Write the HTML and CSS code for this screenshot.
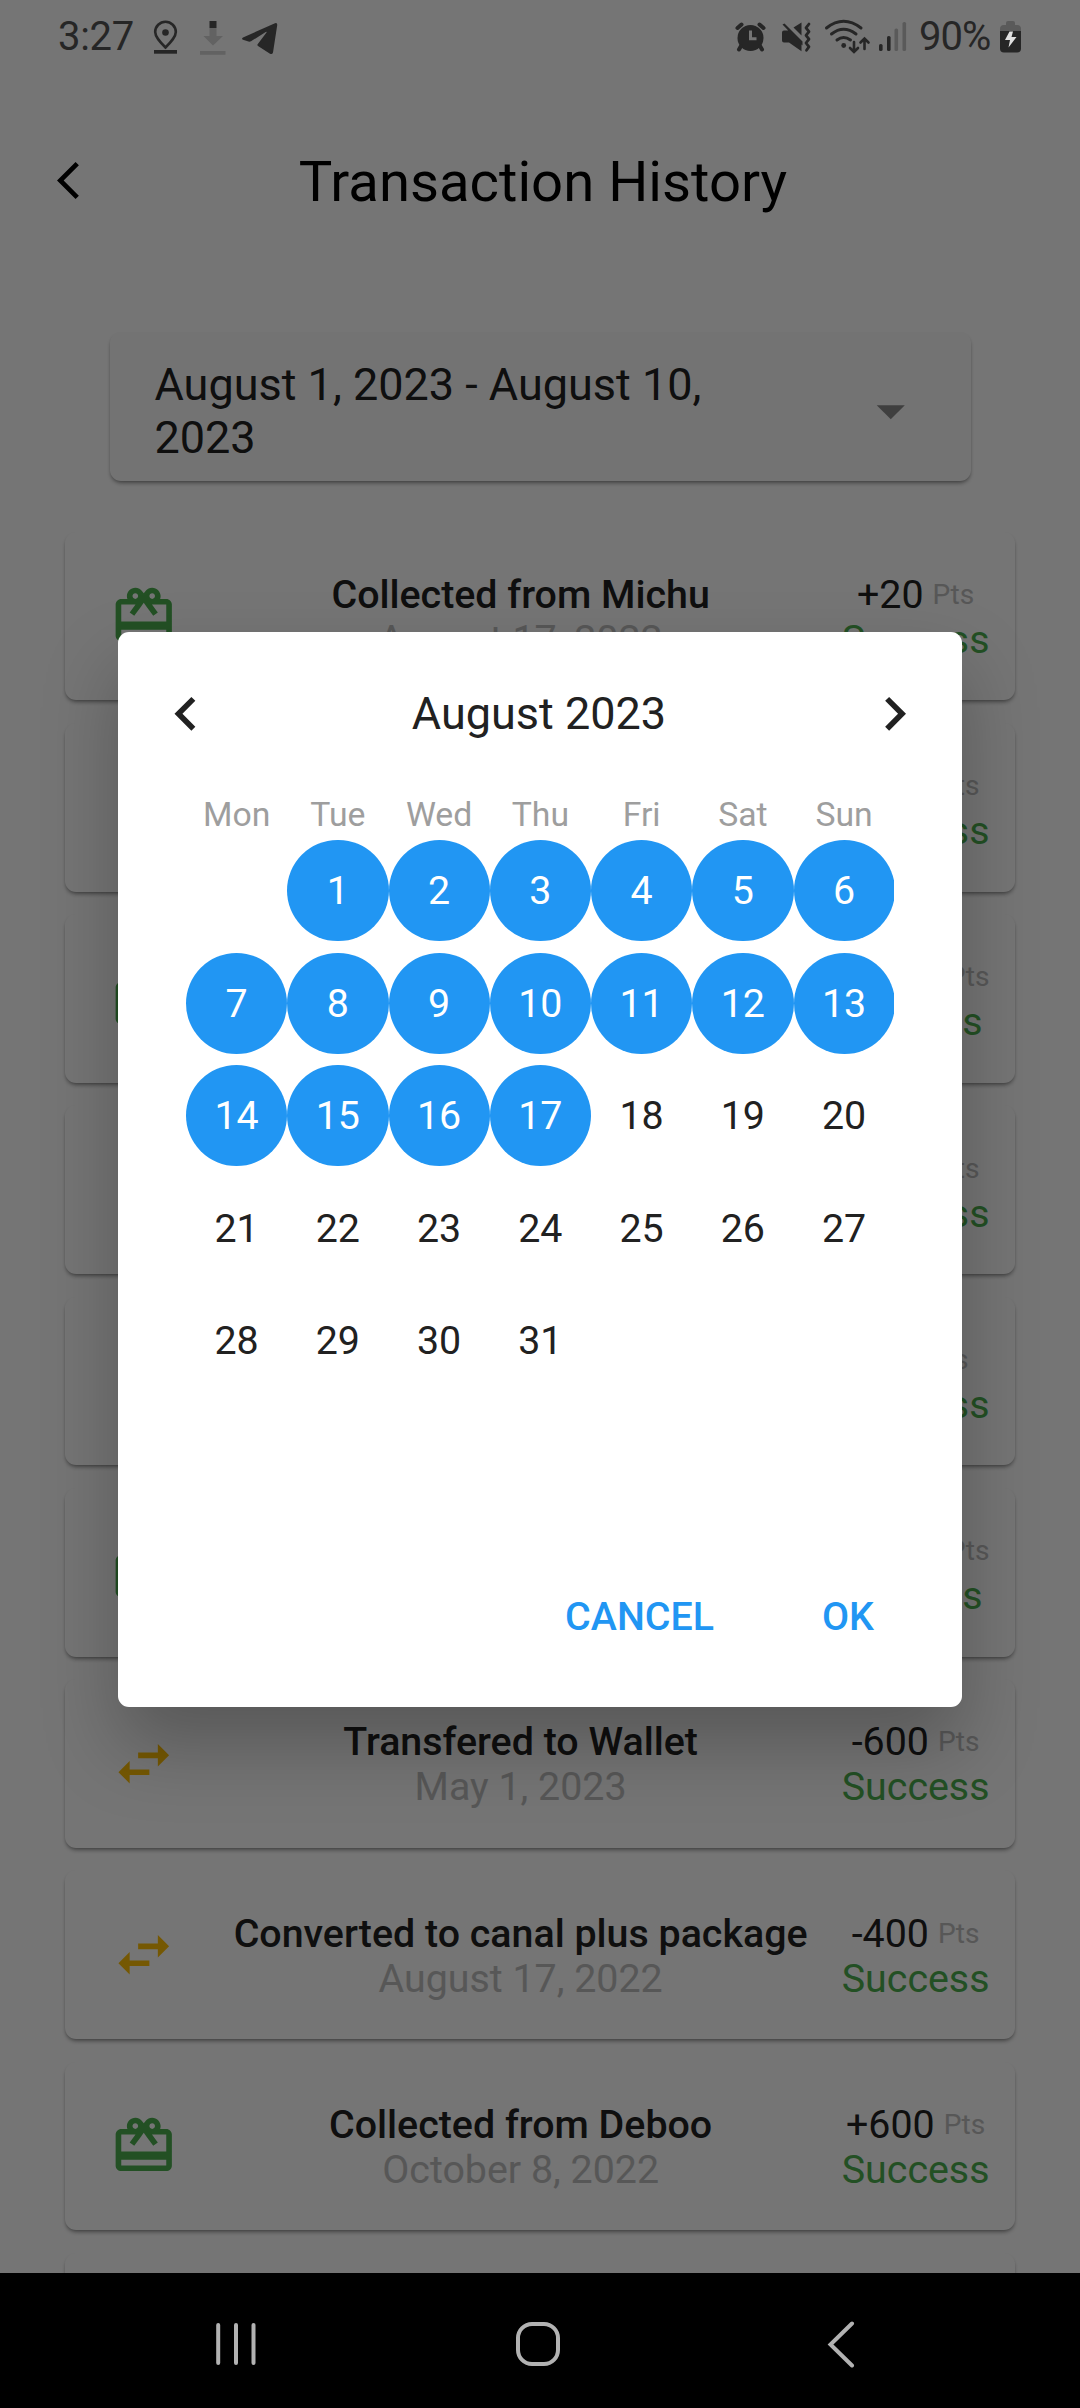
FILE: index.html
```html
<!DOCTYPE html>
<html lang="en">
<head>
<meta charset="utf-8">
<title>Transaction History</title>
<link rel="stylesheet" href="styles.css">
</head>
<body>
<svg class="defs" aria-hidden="true">
  <symbol id="gift" viewBox="0 0 24 24"><path d="M20 6h-2.18c.11-.31.18-.65.18-1 0-1.66-1.34-3-3-3-1.05 0-1.96.54-2.5 1.35l-.5.67-.5-.68C10.96 2.54 10.05 2 9 2 7.34 2 6 3.34 6 5c0 .35.07.69.18 1H4c-1.11 0-1.99.89-1.99 2L2 19c0 1.11.89 2 2 2h16c1.11 0 2-.89 2-2V8c0-1.11-.89-2-2-2zm-5-2c.55 0 1 .45 1 1s-.45 1-1 1-1-.45-1-1 .45-1 1-1zM9 4c.55 0 1 .45 1 1s-.45 1-1 1-1-.45-1-1 .45-1 1-1zm11 15H4v-2h16v2zm0-5H4V8h5.08L7 10.83 8.62 12 11 8.76l1-1.36 1 1.36L15.38 12 17 10.83 14.92 8H20v6z"/></symbol>
  <symbol id="swap" viewBox="0 0 24 24"><path d="M6.99 11L3 15l3.99 4v-3H14v-2H6.99v-3zM21 9l-3.99-4v3H10v2h7.01v3L21 9z"/></symbol>
</svg>
<div class="phone">
  <div class="status">
    <span class="clock">3:27</span>
    <svg class="status-left" viewBox="150 0 140 74">
      <path d="M165.500 47.500C160 42 155.200 37 155.200 32a10.300 10.300 0 0 1 20.600 0c0 5-4.800 10-10.300 15.500z" fill="none" stroke="#262626" stroke-width="2.600"/>
      <circle cx="165.500" cy="32.500" r="3.300"/>
      <path d="M154 50h23v3.700h-23z"/>
      <path d="M209.500 21h7v7h-7z"/>
      <path d="M209.500 28h7v8h6.500L213 45.500 203.500 36h6zM200 51h25.500v3.700H200z" fill="#626262"/>
      <path d="M243 37.500L275 23.300q2.500-.8 2.200 2L273 52.500q-.8 2.200-3 1.200L258 46q-1.200-1 0-2.200l8.500-11.300q.5-1.200-.8-.6L251 41.300q-1.200.7-2.500.3L243 39.800q-2-1 0-2.300z"/>
    </svg>
    <svg class="status-right" viewBox="730 10 190 54">
      <circle cx="751.500" cy="38" r="13"/>
      <path d="M738.500 28l4-3.500M764.500 28l-4-3.500M742 46l-2 3.500M761 46l2 3.500" stroke="#262626" stroke-width="4" stroke-linecap="round"/>
      <path d="M751.500 30.500v8.300h6" fill="none" stroke="#757575" stroke-width="3"/>
      <path d="M783 32.500q0-2 2-2h5l12.500 12.800v8L790 42.500h-5q-2 0-2-2zM794.500 27.500l8-5v13zM783.500 24.500l2-1 18 18v4z"/>
      <path d="M810 24l-3 3.800 3 3.800-3 3.800 3 3.800-3 3.800 3 3.800-2.500 3.500" fill="none" stroke="#262626" stroke-width="2.800" stroke-linecap="round" stroke-linejoin="round"/>
      <g fill="none" stroke="#262626" stroke-width="3" stroke-linecap="round">
        <path d="M827.500 28q17-13.500 34.500 0M832.500 34q12-9.500 24.500 0M838 40q6.500-5 13.500 0"/>
        <path d="M855 42v9M851 48l4 4 4-4M865.500 49v-9.500M861.500 42.500l4-4 4 4" stroke-width="2.600"/>
      </g>
      <circle cx="844.700" cy="45.500" r="2.400"/>
      <rect x="880" y="44" width="3.600" height="7" rx="1.600"/>
      <rect x="888" y="36" width="3.600" height="15" rx="1.600"/>
      <rect x="895.500" y="28.500" width="3.600" height="22.500" rx="1.600" fill="#5a5a5a"/>
      <rect x="903.500" y="22" width="3.600" height="29" rx="1.600" fill="#5a5a5a"/>
    </svg>
    <span class="percent">90%</span>
    <svg class="battery" viewBox="998 18 26 36">
      <path d="M1000 31v-2q0-4 4-4h2v-2q0-2 2-2h5q2 0 2 2v2h2q4 0 4 4v2z" fill="#5a5a5a"/>
      <path d="M1000 31h21v17.500q0 4-4 4h-13q-4 0-4-4z"/>
      <path d="M1009.500 31.500h3.500l-1.500 5.500h5l-8 10.500 1.500-7.500h-5z" fill="#e0e0e0"/>
    </svg>
  </div>

  <main class="screen">
    <header class="appbar">
      <svg class="back" viewBox="0 0 24 24"><path d="M11.670 3.870L9.900 2.100 0 12l9.900 9.900 1.770-1.770L3.540 12z"/></svg>
      <h1>Transaction History</h1>
    </header>
    <div class="range">
      <span class="range-text">August 1, 2023 - August 10, 2023</span>
      <svg class="caret" viewBox="0 0 24 24"><path d="M7 10l5 5 5-5z"/></svg>
    </div>
    <ul class="list">
      <li class="card"><svg class="icon gift"><use href="#gift"/></svg><div class="info"><b>Collected from Michu</b><span>August 17, 2022</span></div><div class="side"><p>+20<small>Pts</small></p><span>Success</span></div></li>
      <li class="card"><svg class="icon swap"><use href="#swap"/></svg><div class="info"><b>Transfered to Wallet</b><span>May 1, 2023</span></div><div class="side"><p>-600<small>Pts</small></p><span>Success</span></div></li>
      <li class="card"><svg class="icon gift"><use href="#gift"/></svg><div class="info"><b>Collected from Deboo</b><span>May 1, 2023</span></div><div class="side"><p>+1000<small>Pts</small></p><span>Success</span></div></li>
      <li class="card"><svg class="icon swap"><use href="#swap"/></svg><div class="info"><b>Transfered to Wallet</b><span>May 1, 2023</span></div><div class="side"><p>-400<small>Pts</small></p><span>Success</span></div></li>
      <li class="card"><svg class="icon swap"><use href="#swap"/></svg><div class="info"><b>Transfered to Wallet</b><span>May 1, 2023</span></div><div class="side"><p>-50<small>Pts</small></p><span>Success</span></div></li>
      <li class="card"><svg class="icon gift"><use href="#gift"/></svg><div class="info"><b>Collected from Deboo</b><span>May 1, 2023</span></div><div class="side"><p>+1000<small>Pts</small></p><span>Success</span></div></li>
      <li class="card"><svg class="icon swap"><use href="#swap"/></svg><div class="info"><b>Transfered to Wallet</b><span>May 1, 2023</span></div><div class="side"><p>-600<small>Pts</small></p><span>Success</span></div></li>
      <li class="card"><svg class="icon swap"><use href="#swap"/></svg><div class="info"><b>Converted to canal plus package</b><span>August 17, 2022</span></div><div class="side"><p>-400<small>Pts</small></p><span>Success</span></div></li>
      <li class="card"><svg class="icon gift"><use href="#gift"/></svg><div class="info"><b>Collected from Deboo</b><span>October 8, 2022</span></div><div class="side"><p>+600<small>Pts</small></p><span>Success</span></div></li>
      <li class="card"></li>
    </ul>
  </main>

  <div class="scrim">
    <section class="dialog">
      <div class="month">
        <svg class="chev" viewBox="0 0 24 24"><path d="M15.410 7.410L14 6l-6 6 6 6 1.410-1.410L10.830 12z"/></svg>
        <h2>August 2023</h2>
        <svg class="chev" viewBox="0 0 24 24"><path d="M10 6L8.590 7.410 13.170 12l-4.580 4.590L10 18l6-6z"/></svg>
      </div>
      <div class="week"><span>Mon</span><span>Tue</span><span>Wed</span><span>Thu</span><span>Fri</span><span>Sat</span><span>Sun</span></div>
      <div class="days">
        <i></i><i class="on">1</i><i class="on">2</i><i class="on">3</i><i class="on">4</i><i class="on">5</i><i class="on">6</i>
        <i class="on">7</i><i class="on">8</i><i class="on">9</i><i class="on">10</i><i class="on">11</i><i class="on">12</i><i class="on">13</i>
        <i class="on">14</i><i class="on">15</i><i class="on">16</i><i class="on">17</i><i>18</i><i>19</i><i>20</i>
        <i>21</i><i>22</i><i>23</i><i>24</i><i>25</i><i>26</i><i>27</i>
        <i>28</i><i>29</i><i>30</i><i>31</i>
      </div>
      <div class="actions"><button>CANCEL</button><button>OK</button></div>
    </section>
  </div>

  <nav class="navbar">
    <svg viewBox="0 0 48 48"><path d="M6.200 5v38M24 5v38M41.500 5v38"/></svg>
    <svg viewBox="0 0 48 48"><rect x="4" y="4" width="40" height="40" rx="14"/></svg>
    <svg viewBox="0 0 48 48"><path d="M36 3.500L14.500 24.500 36 45.500"/></svg>
  </nav>
</div>
</body>
</html>
```
FILE: styles.css
```css
* { box-sizing: border-box; margin: 0; padding: 0; }
body { font-family: Roboto, "Liberation Sans", sans-serif; background: #000; }
svg { display: block; flex: none; }
.defs { position: absolute; width: 0; height: 0; }
.phone { position: relative; display: flex; flex-direction: column; width: 1080px; height: 2408px; overflow: hidden; }

/* status bar, drawn above the scrim */
.status { position: absolute; inset: 0 0 auto; z-index: 3; display: flex; height: 74px; color: #262626; fill: #262626; font-size: 40px; line-height: 74px; }
.clock { width: 92px; margin-left: 58px; letter-spacing: -.3px; }
.status-left { width: 140px; height: 74px; }
.status-right { width: 190px; height: 54px; margin: 10px 0 0 439px; }
.percent { width: 79px; white-space: nowrap; letter-spacing: -1px; }
.battery { width: 26px; height: 36px; margin-top: 18px; }

.screen { height: 2273px; background: #fff; color: #212121; overflow: hidden; }
.appbar { display: flex; align-items: center; height: 260px; padding: 100px 0 0 56.500px; }
.back { width: 45px; height: 45px; fill: #000; }
.appbar h1 { width: 877px; margin-left: 3px; padding-top: 3px; font-size: 56.25px; font-weight: 400; color: #000; text-align: center; }

.range { display: flex; align-items: center; justify-content: space-between; width: 861px; height: 148.5px; margin: 72px 0 0 109.500px; padding: 0 46px 0 45px; border-radius: 11px; background: #fbfbfb; box-shadow: 0 3px 4px -1px rgba(0,0,0,.42), 0 1px 2px rgba(0,0,0,.06); }
.range-text { width: 580px; padding-top: 9px; font-size: 45px; line-height: 53px; }
.caret { width: 67.5px; height: 67.5px; margin-top: 9px; fill: #8a8a8a; }

.list { display: flex; flex-direction: column; gap: 22.5px; margin-top: 51px; padding: 0 65px; list-style: none; }
.card { display: flex; flex: none; align-items: center; height: 168.75px; padding: 0 25.5px 0 45px; border-radius: 11px; background: #fefefe; box-shadow: 0 3px 4px -1px rgba(0,0,0,.42), 0 1px 2px rgba(0,0,0,.06); font-size: 39.375px; line-height: 45px; }
.icon { width: 67.5px; height: 67.5px; }
.gift { fill: #4caf50; }
.swap { fill: #ffc107; }
.info { display: flex; flex: 1; flex-direction: column; padding: 2px 0 0 22px; text-align: center; white-space: nowrap; }
.info b { font-weight: 500; }
.info span { color: #bdbdbd; }
.side { display: flex; flex-direction: column; align-items: center; padding-top: 2px; }
.side p { display: flex; align-items: center; gap: 9px; }
.side small { font-size: 28.125px; color: #bdbdbd; }
.side > span { color: #4caf50; }

.scrim { position: absolute; inset: 0 0 135px; z-index: 2; background: rgba(0,0,0,.54); }
.dialog { position: absolute; top: 632px; left: 118px; width: 844px; height: 1074.5px; border-radius: 11px; background: #fff; color: #212121; box-shadow: 0 38px 75px rgba(0,0,0,.25); }
.month { display: flex; align-items: center; justify-content: space-between; height: 67.5px; margin: 48px 34px 0; }
.month h2 { padding-right: 2px; font-size: 45px; font-weight: 400; }
.chev { width: 67.5px; height: 67.5px; fill: #212121; }
.week, .days { display: grid; grid-template-columns: repeat(7, 101.25px); width: 708px; margin-left: 68px; text-align: center; }
.week { margin-top: 47px; color: #9e9e9e; font-size: 33.75px; line-height: 40px; }
.days { row-gap: 11.25px; margin-top: 5.5px; overflow: hidden; font-size: 39.375px; line-height: 102.5px; }
.days i { height: 101.25px; font-style: normal; border-radius: 50%; }
.days .on { background: #2196f3; color: #fff; }
.actions { display: flex; justify-content: flex-end; gap: 108px; padding-right: 88px; margin-top: 203px; }
.actions button { border: 0; background: none; color: #2196f3; font: 500 39.375px/46px Roboto, "Liberation Sans", sans-serif; }

.navbar { display: flex; gap: 254px; height: 135px; padding: 47px 0 0 212px; background: #000; fill: none; stroke: #b2b2b2; stroke-width: 4; stroke-linecap: round; }
.navbar svg { width: 48px; height: 48px; }
```
